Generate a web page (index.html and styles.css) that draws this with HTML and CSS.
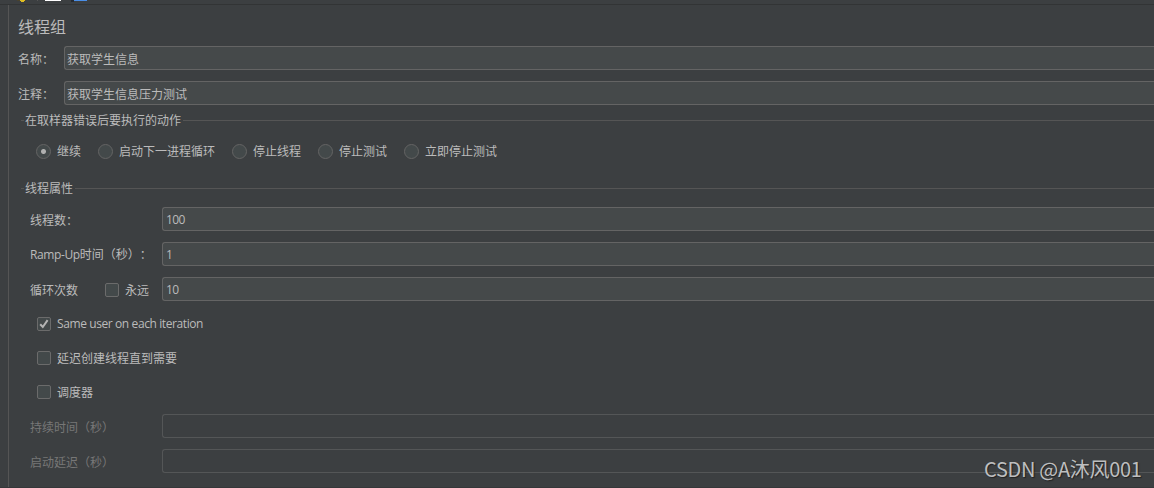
FILE: index.html
```html
<!DOCTYPE html>
<html lang="zh-CN">
<head>
<meta charset="utf-8">
<title>线程组</title>
<link rel="stylesheet" href="styles.css">
</head>
<body>
<div class="window">
  <div class="toolbar">
    <svg width="100" height="4" viewBox="0 0 100 4">
      <path d="M17 0h9v1h-9z" fill="#4a432c"/>
      <path d="M20 0h5v1h-1v1h-3v-1h-1z" fill="#e0bd22"/>
      <path d="M37 0h1v1h-1z" fill="#555"/>
      <path d="M45 0h16v1h-16z" fill="#fff"/>
      <path d="M71 0h3v2h-3z" fill="#252a32"/>
      <path d="M74 0h13v1h-13z" fill="#4a8ee6"/>
    </svg>
  </div>
  <div class="body">
    <div class="tree"></div>
    <main class="panel">
      <h1 class="title">线程组</h1>
      <div class="row head"><label class="name">名称：</label><div class="field">获取学生信息</div></div>
      <div class="row head"><label class="name">注释：</label><div class="field">获取学生信息压力测试</div></div>
      <div class="legend action">在取样器错误后要执行的动作</div>
      <div class="radios">
        <span class="choice"><i class="radio on"></i>继续</span>
        <span class="choice"><i class="radio"></i>启动下一进程循环</span>
        <span class="choice"><i class="radio"></i>停止线程</span>
        <span class="choice"><i class="radio"></i>停止测试</span>
        <span class="choice"><i class="radio"></i>立即停止测试</span>
      </div>
      <div class="legend props">线程属性</div>
      <div class="row prop"><label class="label">线程数：</label><div class="field latin">100</div></div>
      <div class="row prop"><label class="label"><span class="ramp">Ramp-Up</span>时间（秒）：</label><div class="field latin">1</div></div>
      <div class="row prop"><label class="label loops">循环次数<span class="choice forever"><i class="check"></i>永远</span></label><div class="field latin">10</div></div>
      <div class="options">
        <div class="option"><i class="check"><svg width="14" height="14" viewBox="0 0 14 14"><path d="M3.2 7.2 5.8 10 10.6 3.2" fill="none" stroke="#b4b4b4" stroke-width="2"/></svg></i><span class="same">Same user on each iteration</span></div>
        <div class="option"><i class="check"></i>延迟创建线程直到需要</div>
        <div class="option"><i class="check"></i>调度器</div>
      </div>
      <div class="row prop off"><label class="label">持续时间（秒）</label><div class="field"></div></div>
      <div class="row prop off"><label class="label">启动延迟（秒）</label><div class="field"></div></div>
    </main>
  </div>
  <div class="watermark">CSDN @A沐风001</div>
</div>
</body>
</html>
```
FILE: styles.css
```css
* { box-sizing: border-box; }
body {
  margin: 0;
  background: #3c3f41;
  color: #bbb;
  font: 12px/16px "Noto Sans CJK SC", sans-serif;
  text-spacing-trim: space-all;
}
.window {
  position: relative;
  display: flex;
  flex-direction: column;
  height: 488px;
  overflow: hidden;
  border-bottom: 1px solid #353739;
}
.toolbar { height: 5px; flex: none; border-bottom: 1px solid #323435; }
.toolbar svg { display: block; }
.body { display: flex; flex: 1; min-height: 0; }
.tree { width: 8px; flex: none; }
.panel { flex: 1; min-width: 0; border-left: 1px solid #555; white-space: nowrap; }
.title {
  height: 35px;
  margin: 0;
  padding: 9px 0 0 9px;
  font-size: 16px;
  line-height: 24px;
  font-weight: 400;
}
.row { display: flex; align-items: center; height: 35px; }
.name { width: 55px; padding-left: 9px; flex: none; padding-top: 2px; }
.label { width: 153px; padding-left: 21px; flex: none; padding-top: 2px; }
.field {
  flex: 1;
  height: 24px;
  padding: 4px 0 0 2px;
  border: 1px solid #646464;
  border-right: 0;
  border-radius: 3px 0 0 3px;
  background: #45494a;
}
.latin { font-family: "Open Sans", sans-serif; padding-left: 3px; letter-spacing: -0.6px; }
.legend {
  display: flex;
  align-items: center;
  height: 16px;
  padding-left: 12px;
  gap: 2px;
}
.legend::before { content: ""; width: 3px; height: 1px; margin-right: -1px; background: #555; }
.legend::after { content: ""; flex: 1; height: 1px; background: #555; }
.action { margin-top: 2px; }
.radios {
  display: flex;
  align-items: center;
  gap: 17px;
  height: 46px;
  padding-left: 27px;
}
.choice { display: flex; align-items: center; gap: 6px; }
.radio {
  width: 15px;
  height: 15px;
  border: 1px solid #646464;
  border-radius: 50%;
  background: #43494a;
}
.on { background: radial-gradient(circle, #b0b0b0 2px, #43494a 3px); }
.props { margin-top: 6px; margin-bottom: 5px; }
.check {
  flex: none;
  width: 14px;
  height: 14px;
  border: 1px solid #6b6b6b;
  border-radius: 2px;
  background: #43494a;
}
.check svg { display: block; margin: -1px; }
.loops { display: flex; align-items: center; }
.forever { margin-left: 27px; }
.options { height: 102px; padding-top: 1px; }
.option { display: flex; align-items: center; gap: 6px; height: 34px; padding-left: 28px; }
.ramp, .same { font-family: "Open Sans", sans-serif; letter-spacing: -0.4px; }
.off { color: #777; }
.off .field { background: none; border-color: #545657; }
.watermark {
  position: absolute;
  left: 984px;
  top: 455px;
  font: 20px/28px "Noto Sans CJK SC", sans-serif;
  letter-spacing: -0.3px;
  color: #bdbebf;
  text-shadow: 1px 1px 1px #222;
  white-space: nowrap;
}
```
